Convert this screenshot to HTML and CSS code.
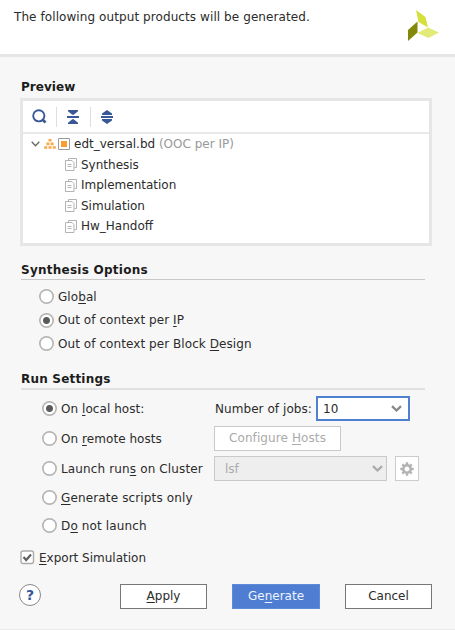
FILE: index.html
```
<!DOCTYPE html>
<html lang="en">
<head>
<meta charset="utf-8">
<title>Generate Output Products</title>
<link rel="stylesheet" href="styles.css">
</head>
<body>
<svg width="0" height="0" class="defs">
  <symbol id="pages" viewBox="0 0 12 13"><path d="M3.500 2.500v-2h8v9H9.500M.5 2.500h6.500l2 2v8H.5z" fill="none" stroke="#b3b3b3"/><path d="M2.500 6.500h4M2.500 8.500h4" stroke="#b8b8b8" fill="none"/></symbol>
</svg>
<div class="dialog">
  <header class="header">
    <p class="message">The following output products will be generated.</p>
    <svg class="logo" width="32" height="32" viewBox="0 0 32 32"><path d="M8 0l9.500 7 2.500 10.500L10.500 12z" fill="#d5e03a"/><path d="M0 20l9.500-8.500v11L0 31z" fill="#838907"/><path d="M9.500 23L20 17.500 31 22.500 20.500 28z" fill="#e2eb78"/></svg>
  </header>

  <section class="preview">
    <h2>Preview</h2>
    <div class="preview-box">
      <div class="toolbar">
        <svg width="15" height="15" viewBox="0 0 15 15"><circle cx="6.800" cy="6.800" r="5.600" fill="none" stroke="#3a5896" stroke-width="1.900"/><path d="M10.500 10.500l3 3" stroke="#3a5896" stroke-width="2.600"/></svg>
        <i class="sep"></i>
        <svg width="12" height="14" viewBox="0 0 12 14"><path d="M1 0h10v1.200L6.700 4.700H5.300L1 1.200zM0 6h12v2H0zM1 14h10v-1.200L6.700 9.300H5.300L1 12.800z" fill="#3a5896"/></svg>
        <i class="sep"></i>
        <svg width="12" height="14" viewBox="0 0 12 14"><path d="M6 0l5 3.500V5H1V3.500zM0 6h12v2H0zM1 9h10v1.500L6 14l-5-3.500z" fill="#3a5896"/></svg>
      </div>
      <ul class="tree">
        <li class="root">
          <svg class="chev" width="9" height="6" viewBox="0 0 9 6"><path d="M.7.700l3.800 4 3.800-4" fill="none" stroke="#666" stroke-width="1.300"/></svg>
          <svg class="pyr" width="12" height="10" viewBox="0 0 12 10"><path d="M4.500 0h3v2.600h-3zM2.400 3.600h3v2.600h-3zM6.600 3.600h3v2.600h-3zM.2 7.200h3v2.500h-3zM4.500 7.200h3v2.500h-3zM8.800 7.200h3v2.500h-3z" fill="#fba848"/></svg>
          <svg class="bd" width="12" height="12" viewBox="0 0 12 12"><path d="M.5.500h11v11H.5z" fill="#fff" stroke="#999"/><path d="M3 3h6v6H3z" fill="#fb9c32"/></svg>
          <span class="t-bd">edt_versal.bd <em>(OOC per IP)</em></span>
        </li>
        <li><svg width="12" height="13"><use href="#pages"/></svg><span>Synthesis</span></li>
        <li><svg width="12" height="13"><use href="#pages"/></svg><span>Implementation</span></li>
        <li><svg width="12" height="13"><use href="#pages"/></svg><span>Simulation</span></li>
        <li><svg width="12" height="13"><use href="#pages"/></svg><span>Hw_Handoff</span></li>
      </ul>
    </div>
  </section>

  <section class="synth">
    <h2>Synthesis Options</h2>
    <div class="row"><i class="radio"></i><span>Glo<u>b</u>al</span></div>
    <div class="row"><i class="radio on"></i><span>Out of context per <u>I</u>P</span></div>
    <div class="row"><i class="radio"></i><span>Out of context per Block <u>D</u>esign</span></div>
  </section>

  <section class="run">
    <h2>Run Settings</h2>
    <div class="row"><i class="radio on"></i><span class="label">On <u>l</u>ocal host:</span>
      <span class="jobs">Number of jobs:</span>
      <div class="combo focus"><span>10</span><svg width="11" height="8" viewBox="0 0 11 8"><path d="M1 1.200l4.500 4.300L10 1.200" fill="none" stroke="#888" stroke-width="2.300"/></svg></div>
    </div>
    <div class="row"><i class="radio"></i><span class="label">On <u>r</u>emote hosts</span>
      <div class="configure">Configure <u>H</u>osts</div>
    </div>
    <div class="row"><i class="radio"></i><span class="label cluster">Launch run<u>s</u> on Cluster</span>
      <div class="combo disabled"><span>lsf</span><svg width="11" height="8" viewBox="0 0 11 8"><path d="M1 1.200l4.500 4.300L10 1.200" fill="none" stroke="#aaa" stroke-width="2.300"/></svg></div>
      <div class="gear"><svg width="14" height="14" viewBox="-7 -7 14 14"><circle r="3.700" fill="none" stroke="#b3b3b3" stroke-width="2.600"/><path d="M0-6.700v2.500M0 4.200v2.500M-6.700 0h2.500M4.200 0h2.500M-4.700-4.700l1.700 1.700M3 3l1.700 1.700M-4.700 4.700L-3 3M3-3l1.700-1.700" stroke="#b3b3b3" stroke-width="2.400"/></svg></div>
    </div>
    <div class="row"><i class="radio"></i><span class="scripts"><u>G</u>enerate scripts only</span></div>
    <div class="row"><i class="radio"></i><span class="scripts">D<u>o</u> not launch</span></div>
  </section>

  <div class="export"><svg width="15" height="15" viewBox="0 0 15 15"><rect x="1" y="1" width="12.500" height="12.500" rx="2" fill="#fff" stroke="#aaa" stroke-width="1.400"/><path d="M3.500 7l2.700 3L11 4.500" fill="none" stroke="#606060" stroke-width="2.200"/></svg><span><u>E</u>xport Simulation</span></div>

  <footer class="footer">
    <div class="help">?</div>
    <div class="btn"><u>A</u>pply</div>
    <div class="btn primary">Ge<u>n</u>erate</div>
    <div class="btn">Cancel</div>
  </footer>
</div>
</body>
</html>
```
FILE: styles.css
```
* { box-sizing: border-box; margin: 0; padding: 0; }
body { width: 455px; height: 630px; overflow: hidden; background: #f7f7f7; font: 12px/16px "DejaVu Sans", sans-serif; color: #2b2b2b; }
.defs { display: none; }
.dialog { height: 630px; display: flex; flex-direction: column; border-bottom: 1px solid #e9e9e9; white-space: nowrap; }
svg, i { flex: none; display: block; }
u { text-decoration: underline; text-underline-offset: 2px; text-decoration-thickness: 1px; text-decoration-skip-ink: none; }
h2 { font-size: 12px; line-height: 16px; font-weight: bold; color: #1c1c1c; letter-spacing: .25px; }

.header { height: 57px; background: #fff; border-bottom: 3px solid #e6e6e6; display: flex; justify-content: space-between; padding: 9px 15px 0 14px; }
.message { letter-spacing: .085px; }
.logo { margin-top: 1px; }

.preview { padding: 22px 23px 0 20px; }
.preview h2 { padding-left: 1px; height: 19px; letter-spacing: .05px; }
.preview-box { height: 148px; border: 3px solid #e6e6e6; background: #fff; }
.toolbar { height: 33px; border-bottom: 2px solid #e9e9e9; display: flex; align-items: center; padding-left: 9px; }
.sep { width: 1px; height: 20px; background: #dedede; margin: 0 11px 0 9px; }
.sep + svg { margin-left: -1px; }
.sep ~ .sep { margin-left: 11px; }
.tree { list-style: none; }
.tree li { height: 20.5px; display: flex; align-items: center; gap: 4px; padding-left: 42px; }
.tree .root { padding-left: 8px; gap: 0; }
.pyr { margin: 0 2px 0 4px; }
.t-bd { margin-left: 4px; }
.tree em { font-style: normal; color: #999; }

.synth { margin: 16px 30px 0 21px; }
.synth h2, .run h2 { height: 18px; border-bottom: 1px solid #c9c9c9; }
.row { display: flex; align-items: center; }
.synth .row { height: 23.5px; padding-left: 18px; letter-spacing: .07px; }
.synth h2 { margin-bottom: 5px; }
.radio { width: 15px; height: 15px; border-radius: 50%; background: radial-gradient(circle, #fff 5.500px, #b4b4b4 6.200px); margin-right: 4px; }
.radio.on { background: radial-gradient(circle, #5a5a5a 3px, #fff 4px, #fff 5.500px, #b4b4b4 6.200px); }

.run { margin: 15px 30px 0 21px; }
.run h2 { border-bottom: 2px solid #e0e0e0; height: 19px; margin-bottom: 4px; letter-spacing: .2px; }
.run .row { height: 30px; padding-left: 21px; }
.run .row:nth-of-type(4) { height: 28px; }
.run .row:nth-of-type(5) { height: 28px; }
.label { width: 153px; letter-spacing: .06px; }
.cluster { letter-spacing: .14px; }
.scripts { letter-spacing: .14px; }
.jobs { width: 102px; padding-left: 1px; letter-spacing: .06px; }
.combo { display: flex; align-items: center; justify-content: space-between; height: 25px; width: 94px; background: #fff; padding: 0 6px 0 5px; flex: none; }
.focus { border: 2px solid #5080d0; }
.disabled { width: 173px; border: 1px solid #c9c9c9; background: #eee; color: #aaa; padding: 0 3px 0 10px; }
.configure { width: 127px; height: 25px; border: 1px solid #c9c9c9; background: #fff; color: #aaa; text-align: center; line-height: 23px; letter-spacing: .1px; }
.gear { flex: none; width: 24px; height: 25px; margin-left: 8px; border: 1px solid #ccc; background: #fff; display: flex; align-items: center; justify-content: center; }

.export { display: flex; align-items: center; gap: 4px; height: 16px; margin: 10px 0 0 20px; }
.footer { display: flex; margin: 18px 0 0 19px; }
.help { flex: none; width: 22px; height: 22px; border: 1px solid #888; border-radius: 50%; background: #fff; color: #34549a; font-weight: bold; font-size: 14px; line-height: 20px; text-align: center; margin-right: 79px; }
.btn { flex: none; width: 87px; height: 25px; border: 1px solid #777; background: #fff; text-align: center; line-height: 23px; margin-right: 25px; }
.primary { width: 88px; background: #4f7dd1; border-color: #5f8ad8; color: #eef3ff; }
```
